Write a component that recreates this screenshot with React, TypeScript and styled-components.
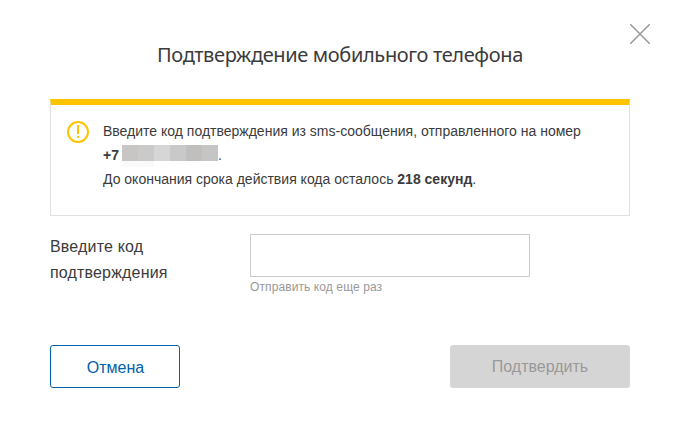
import React, { useState } from 'react';
import styled, { createGlobalStyle } from 'styled-components';

const GlobalStyle = createGlobalStyle`
  *, *::before, *::after { box-sizing: border-box; }
  body { margin: 0; background: #fff; }
`;

const Dialog = styled.main`
  position: relative;
  width: 678px;
  height: 434px;
  padding: 40px 48px 0 50px;
  background: #fff;
  color: #3b3b3c;
  font-family: 'Liberation Sans', Arial, sans-serif;
`;

const CloseButton = styled.button`
  position: absolute;
  top: 24px;
  left: 630px;
  width: 20px;
  height: 20px;
  padding: 0;
  border: 0;
  background: none;
  cursor: pointer;

  svg { display: block; }
`;

const Title = styled.h1`
  width: 580px;
  height: 30px;
  margin: 0 0 29px;
  text-align: center;
  white-space: nowrap;
  font: 400 20px/30px 'Noto Sans', sans-serif;
  letter-spacing: -0.36px;
`;

const Notice = styled.section`
  display: flex;
  gap: 14px;
  width: 580px;
  height: 117px;
  padding: 8px 15px 0 16px;
  border: 1px solid #e1e1e1;
  border-top: 6px solid #ffc400;
`;

const WarningIcon = styled.svg`
  flex: none;
  width: 22px;
  height: 22px;
  margin-top: 8px;
`;

const NoticeText = styled.div`
  padding-top: 6px;
  white-space: nowrap;
  font-size: 14px;
  line-height: 24px;

  p { margin: 0; }
`;

const PhoneLine = styled.p`
  display: flex;
  height: 24px;
`;

const MaskedNumber = styled.span`
  display: grid;
  grid-template-columns: repeat(6, 16px);
  grid-template-rows: 16px 6px;
  height: 22px;
  margin: 2px 0 0 3px;
`;

const MaskCell = styled.span<{ $tone: string }>`
  background: ${({ $tone }) => $tone};
`;

const Field = styled.div`
  display: flex;
  height: 111px;
  padding-top: 18px;
`;

const Label = styled.label`
  width: 200px;
  font-size: 16px;
  line-height: 26px;
  letter-spacing: 0.17px;
`;

const Control = styled.div`
  display: flex;
  flex-direction: column;
  align-items: flex-start;
`;

const CodeInput = styled.input`
  width: 280px;
  height: 43px;
  padding: 0 12px;
  border: 1px solid #cbcbcd;
  border-radius: 0;
  outline: 0;
  font: 16px 'Liberation Sans', Arial, sans-serif;
`;

const ResendLink = styled.button`
  height: 20px;
  padding: 0;
  border: 0;
  background: none;
  color: #999;
  font: 12px/20px 'Liberation Sans', Arial, sans-serif;
  letter-spacing: 0.1px;
`;

const Actions = styled.div`
  display: flex;
  justify-content: space-between;
  width: 580px;
  padding-top: 18px;
`;

const Button = styled.button<{ $primary?: boolean }>`
  width: ${({ $primary }) => ($primary ? 180 : 130)}px;
  height: 43px;
  padding: ${({ $primary }) => ($primary ? '0' : '2px 0 0 1px')};
  border: 1px solid ${({ $primary }) => ($primary ? '#d5d5d5' : '#0060aa')};
  border-radius: 3px;
  background: ${({ $primary }) => ($primary ? '#d5d5d5' : '#fff')};
  color: ${({ $primary }) => ($primary ? '#999' : '#0060aa')};
  font: 16px/39px 'Liberation Sans', Arial, sans-serif;
`;

const maskTones = [
  '#c7c6c5', '#cbcaca', '#d6d6d6', '#cac9c9', '#c0bfbd', '#c5c5c6',
  '#fafafa', '#fafafa',
];

export default function App() {
  const [code, setCode] = useState('');

  return (
    <>
      <GlobalStyle />
      <Dialog>
        <CloseButton aria-label="Закрыть">
          <svg width="20" height="20" viewBox="0 0 20 20" fill="none" stroke="#999" strokeWidth="1.5">
            <path d="M0 0L20 20M20 0L0 20" />
          </svg>
        </CloseButton>
        <Title>Подтверждение мобильного телефона</Title>
        <Notice>
          <WarningIcon viewBox="0 0 22 22" fill="none" stroke="#ffc400" strokeWidth="2">
            <circle cx="11" cy="11" r="10" />
            <path d="M11 4V13M11 15V17" />
          </WarningIcon>
          <NoticeText>
            <p>Введите код подтверждения из sms-сообщения, отправленного на номер</p>
            <PhoneLine>
              <b>+7</b>
              <MaskedNumber>
                {maskTones.map((tone, i) => <MaskCell key={i} $tone={tone} />)}
              </MaskedNumber>
              <span>.</span>
            </PhoneLine>
            <p>До окончания срока действия кода осталось <b>218 секунд</b>.</p>
          </NoticeText>
        </Notice>
        <Field>
          <Label htmlFor="code">Введите код<br />подтверждения</Label>
          <Control>
            <CodeInput id="code" value={code} onChange={(e) => setCode(e.target.value)} />
            <ResendLink>Отправить код еще раз</ResendLink>
          </Control>
        </Field>
        <Actions>
          <Button>Отмена</Button>
          <Button $primary disabled>Подтвердить</Button>
        </Actions>
      </Dialog>
    </>
  );
}
